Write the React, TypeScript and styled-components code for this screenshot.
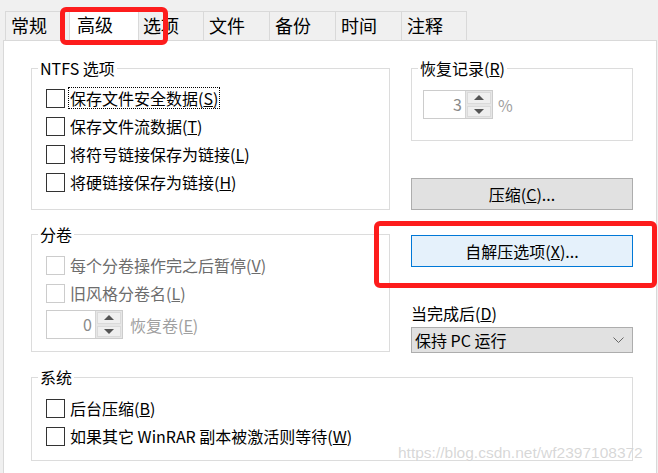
import React from "react";
import styled, { createGlobalStyle, css } from "styled-components";

const GlobalStyle = createGlobalStyle`
  html, body {
    margin: 0;
    padding: 0;
    background: #f0f0f0;
    overflow: hidden;
  }
  body {
    font-family: "Noto Sans CJK SC", "Noto Sans", sans-serif;
    font-size: 16px;
    color: #000;
  }
`;

const Window = styled.div`
  position: relative;
  width: 658px;
  height: 473px;
  overflow: hidden;
  background: #f0f0f0;
`;

const TabStrip = styled.div`
  position: relative;
  z-index: 2;
  display: flex;
  align-items: flex-start;
  height: 29px;
  padding: 11px 0 0 5px;
`;

const Tab = styled.div<{ $active?: boolean }>`
  position: relative;
  box-sizing: border-box;
  width: 66px;
  height: 29px;
  padding-left: 5px;
  border: 1px solid #d9d9d9;
  border-right: none;
  border-bottom: none;
  background: #f0f0f0;
  font-size: 18px;
  line-height: 27px;
  white-space: nowrap;

  &:last-child {
    border-right: 1px solid #d9d9d9;
  }

  ${({ $active }) =>
    $active &&
    css`
      z-index: 2;
      width: 70px;
      height: 33px;
      margin: -3px -2px 0;
      padding-left: 7px;
      border-right: 1px solid #d9d9d9;
      background: #fff;
      line-height: 30px;
    `}
`;

const Panel = styled.div`
  position: relative;
  z-index: 1;
  box-sizing: border-box;
  width: 654px;
  height: 440px;
  margin-left: 3px;
  padding: 17px 23px 0 27px;
  border: 1px solid #d9d9d9;
  background: #fff;
`;

const Columns = styled.div`
  display: grid;
  grid-template-columns: 359px 222px;
  column-gap: 21px;
  align-items: start;
`;

const Column = styled.div`
  display: flex;
  flex-direction: column;
`;

const Group = styled.fieldset<{ $top?: number; $pad: string }>`
  margin: ${({ $top = 0 }) => $top}px 0 0;
  padding: ${({ $pad }) => $pad};
  min-width: 0;
  border: 1px solid #dcdcdc;
`;

const Legend = styled.legend`
  margin-left: 6px;
  padding: 0 2px;
  font-size: 16px;
  line-height: 21px;
`;

const GroupBody = styled.div<{ $indent: number }>`
  padding-left: ${({ $indent }) => $indent}px;
`;

const CheckRow = styled.div<{ $disabled?: boolean }>`
  display: flex;
  align-items: center;
  gap: 3px;
  height: 28px;
  color: ${({ $disabled }) => ($disabled ? "#6d6d6d" : "#000")};
`;

const Box = styled.span<{ $disabled?: boolean }>`
  box-sizing: border-box;
  width: 19px;
  height: 19px;
  flex: none;
  background: #fff;
  border: 1px solid ${({ $disabled }) => ($disabled ? "#cccccc" : "#333333")};
`;

const CheckLabel = styled.span<{ $focused?: boolean }>`
  padding: 0 1px;
  line-height: 20px;
  border: 1px ${({ $focused }) => ($focused ? "dotted #000" : "solid transparent")};
  white-space: nowrap;
`;

const SpinRow = styled.div<{ $top?: number }>`
  display: flex;
  align-items: center;
  margin-top: ${({ $top = 0 }) => $top}px;
`;

const Spinner = styled.div<{ $width: number }>`
  box-sizing: border-box;
  display: flex;
  width: ${({ $width }) => $width}px;
  height: 29px;
  border: 1px solid #cccccc;
  background: #fff;
`;

const SpinValue = styled.span`
  flex: 1;
  padding-right: 3px;
  text-align: right;
  color: #8a8a8a;
  font-size: 16px;
  line-height: 27px;
`;

const SpinButtons = styled.div`
  display: flex;
  flex-direction: column;
  width: 26px;
  background: #e6e6e6;
  border-left: 1px solid #d4d4d4;
`;

const SpinButton = styled.div`
  flex: 1;
  display: flex;
  align-items: center;
  justify-content: center;
  margin: 1px;
  background: #efefef;
  border: 1px solid #dadada;
`;

const Arrow = styled.span<{ $down?: boolean }>`
  width: 0;
  height: 0;
  border-left: 5px solid transparent;
  border-right: 5px solid transparent;
  ${({ $down }) =>
    $down ? "border-top: 5px solid #555;" : "border-bottom: 5px solid #555;"}
`;

const DimText = styled.span<{ $gap: number }>`
  margin-left: ${({ $gap }) => $gap}px;
  color: #a0a0a0;
  line-height: 20px;
  white-space: nowrap;
`;

const PushButton = styled.div<{ $top: number; $primary?: boolean }>`
  box-sizing: border-box;
  height: 32px;
  margin-top: ${({ $top }) => $top}px;
  border: 1px solid ${({ $primary }) => ($primary ? "#0078d7" : "#adadad")};
  background: ${({ $primary }) => ($primary ? "#e5f1fb" : "#e1e1e1")};
  text-align: center;
  line-height: 30px;
`;

const FieldLabel = styled.div`
  margin-top: 36px;
  line-height: 20px;
`;

const Select = styled.div`
  box-sizing: border-box;
  display: flex;
  align-items: center;
  justify-content: space-between;
  height: 26px;
  margin-top: 4px;
  padding: 0 8px 0 3px;
  border: 1px solid #adadad;
  background: #e1e1e1;
  line-height: 24px;
`;

const Highlight = styled.div<{ $x: number; $y: number; $w: number; $h: number }>`
  position: absolute;
  z-index: 5;
  left: ${({ $x }) => $x}px;
  top: ${({ $y }) => $y}px;
  width: ${({ $w }) => $w}px;
  height: ${({ $h }) => $h}px;
  box-sizing: border-box;
  border: 5px solid #fd1c1c;
  border-radius: 6px;
  pointer-events: none;
`;

const Watermark = styled.div`
  position: absolute;
  z-index: 4;
  left: 398px;
  top: 444px;
  font-family: "Liberation Sans", Arial, sans-serif;
  font-size: 15.5px;
  color: rgba(175, 175, 175, 0.5);
  text-shadow: 0 0 1px #fff;
  white-space: nowrap;
`;

const accel = (label: string) => {
  const i = label.indexOf("&");
  if (i < 0) return label;
  return (
    <>
      {label.slice(0, i)}
      <u>{label[i + 1]}</u>
      {label.slice(i + 2)}
    </>
  );
};

const tabs = ["常规", "高级", "选项", "文件", "备份", "时间", "注释"];

const ntfsOptions = [
  "保存文件安全数据(&S)",
  "保存文件流数据(&T)",
  "将符号链接保存为链接(&L)",
  "将硬链接保存为链接(&H)",
];

const Check: React.FC<{ label: string; disabled?: boolean; focused?: boolean }> = ({
  label,
  disabled,
  focused,
}) => (
  <CheckRow $disabled={disabled}>
    <Box $disabled={disabled} />
    <CheckLabel $focused={focused}>{accel(label)}</CheckLabel>
  </CheckRow>
);

const Spin: React.FC<{ value: string; width: number }> = ({ value, width }) => (
  <Spinner $width={width}>
    <SpinValue>{value}</SpinValue>
    <SpinButtons>
      <SpinButton>
        <Arrow />
      </SpinButton>
      <SpinButton>
        <Arrow $down />
      </SpinButton>
    </SpinButtons>
  </Spinner>
);

export default function App() {
  return (
    <Window>
      <GlobalStyle />
      <TabStrip>
        {tabs.map((t) => (
          <Tab key={t} $active={t === "高级"}>
            {t}
          </Tab>
        ))}
      </TabStrip>

      <Panel>
        <Columns>
          <Column>
            <Group $pad="5px 0 13px">
              <Legend>NTFS 选项</Legend>
              <GroupBody $indent={14}>
                {ntfsOptions.map((o, i) => (
                  <Check key={o} label={o} focused={i === 0} />
                ))}
              </GroupBody>
            </Group>

            <Group $top={14} $pad="6px 0 12px">
              <Legend>分卷</Legend>
              <GroupBody $indent={14}>
                <Check label="每个分卷操作完之后暂停(&V)" disabled />
                <Check label="旧风格分卷名(&L)" disabled />
                <SpinRow $top={3}>
                  <Spin value="0" width={77} />
                  <DimText $gap={7}>{accel("恢复卷(&E)")}</DimText>
                </SpinRow>
              </GroupBody>
            </Group>
          </Column>

          <Column>
            <Group $pad="11px 0 21px">
              <Legend>{accel("恢复记录(&R)")}</Legend>
              <GroupBody $indent={11}>
                <SpinRow>
                  <Spin value="3" width={70} />
                  <DimText $gap={5}>%</DimText>
                </SpinRow>
              </GroupBody>
            </Group>

            <PushButton $top={37}>{accel("压缩(&C)...")}</PushButton>
            <PushButton $top={25} $primary>
              {accel("自解压选项(&X)...")}
            </PushButton>

            <FieldLabel>{accel("当完成后(&D)")}</FieldLabel>
            <Select>
              <span>保持 PC 运行</span>
              <svg width="11" height="7" viewBox="0 0 11 7">
                <polyline points="0.5,0.5 5.5,5.5 10.5,0.5" fill="none" stroke="#666" strokeWidth="1" />
              </svg>
            </Select>
          </Column>
        </Columns>

        <Group $top={14} $pad="6px 0 10px">
          <Legend>系统</Legend>
          <GroupBody $indent={14}>
            <Check label="后台压缩(&B)" />
            <Check label="如果其它 WinRAR 副本被激活则等待(&W)" />
          </GroupBody>
        </Group>
      </Panel>

      <Highlight $x={60} $y={7} $w={108} $h={38} />
      <Highlight $x={374} $y={221} $w={283} $h={67} />
      <Watermark>https://blog.csdn.net/wf2397108372</Watermark>
    </Window>
  );
}
